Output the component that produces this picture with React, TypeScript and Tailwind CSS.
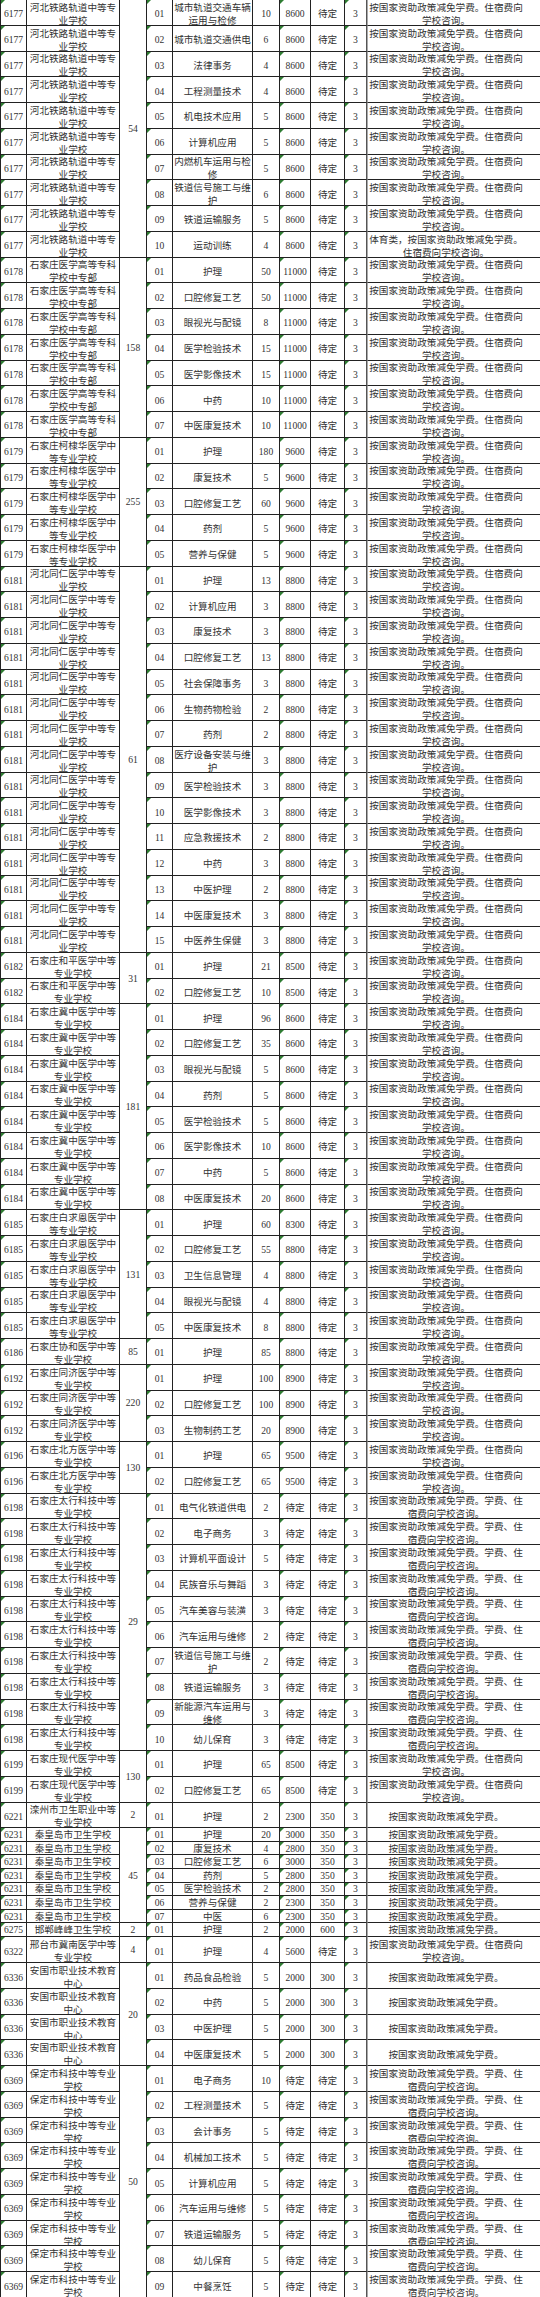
import React from "react";

type Major = { c: string; n: string; p: string; t: string; a: string; note?: string };
type Group = { code: string; school: string[]; total: string; note: string; single?: boolean; majors: Major[] };

const NOTES: Record<string, string[]> = {
  A: ["按国家资助政策减免学费。住宿费向", "学校咨询。"],
  B: ["体育类，按国家资助政策减免学费。", "住宿费向学校咨询。"],
  C: ["按国家资助政策减免学费。学费、住", "宿费向学校咨询。"],
  D: ["按国家资助政策减免学费。"],
};

const m = (c: string, n: string, p: string, t: string, a: string, note?: string): Major => ({ c, n, p, t, a, note });

const GROUPS: Group[] = [
  {
    code: "6177", school: ["河北铁路轨道中等专", "业学校"], total: "54", note: "A",
    majors: [
      m("01", "城市轨道交通车辆/运用与检修", "10", "8600", "待定"),
      m("02", "城市轨道交通供电", "6", "8600", "待定"),
      m("03", "法律事务", "4", "8600", "待定"),
      m("04", "工程测量技术", "4", "8600", "待定"),
      m("05", "机电技术应用", "5", "8600", "待定"),
      m("06", "计算机应用", "5", "8600", "待定"),
      m("07", "内燃机车运用与检/修", "5", "8600", "待定"),
      m("08", "铁道信号施工与维/护", "6", "8600", "待定"),
      m("09", "铁道运输服务", "5", "8600", "待定"),
      m("10", "运动训练", "4", "8600", "待定", "B"),
    ],
  },
  {
    code: "6178", school: ["石家庄医学高等专科", "学校中专部"], total: "158", note: "A",
    majors: [
      m("01", "护理", "50", "11000", "待定"),
      m("02", "口腔修复工艺", "50", "11000", "待定"),
      m("03", "眼视光与配镜", "8", "11000", "待定"),
      m("04", "医学检验技术", "15", "11000", "待定"),
      m("05", "医学影像技术", "15", "11000", "待定"),
      m("06", "中药", "10", "11000", "待定"),
      m("07", "中医康复技术", "10", "11000", "待定"),
    ],
  },
  {
    code: "6179", school: ["石家庄柯棣华医学中", "等专业学校"], total: "255", note: "A",
    majors: [
      m("01", "护理", "180", "9600", "待定"),
      m("02", "康复技术", "5", "9600", "待定"),
      m("03", "口腔修复工艺", "60", "9600", "待定"),
      m("04", "药剂", "5", "9600", "待定"),
      m("05", "营养与保健", "5", "9600", "待定"),
    ],
  },
  {
    code: "6181", school: ["河北同仁医学中等专", "业学校"], total: "61", note: "A",
    majors: [
      m("01", "护理", "13", "8800", "待定"),
      m("02", "计算机应用", "3", "8800", "待定"),
      m("03", "康复技术", "3", "8800", "待定"),
      m("04", "口腔修复工艺", "13", "8800", "待定"),
      m("05", "社会保障事务", "3", "8800", "待定"),
      m("06", "生物药物检验", "2", "8800", "待定"),
      m("07", "药剂", "2", "8800", "待定"),
      m("08", "医疗设备安装与维/护", "3", "8800", "待定"),
      m("09", "医学检验技术", "3", "8800", "待定"),
      m("10", "医学影像技术", "3", "8800", "待定"),
      m("11", "应急救援技术", "2", "8800", "待定"),
      m("12", "中药", "3", "8800", "待定"),
      m("13", "中医护理", "2", "8800", "待定"),
      m("14", "中医康复技术", "3", "8800", "待定"),
      m("15", "中医养生保健", "3", "8800", "待定"),
    ],
  },
  {
    code: "6182", school: ["石家庄和平医学中等", "专业学校"], total: "31", note: "A",
    majors: [
      m("01", "护理", "21", "8500", "待定"),
      m("02", "口腔修复工艺", "10", "8500", "待定"),
    ],
  },
  {
    code: "6184", school: ["石家庄冀中医学中等", "专业学校"], total: "181", note: "A",
    majors: [
      m("01", "护理", "96", "8600", "待定"),
      m("02", "口腔修复工艺", "35", "8600", "待定"),
      m("03", "眼视光与配镜", "5", "8600", "待定"),
      m("04", "药剂", "5", "8600", "待定"),
      m("05", "医学检验技术", "5", "8600", "待定"),
      m("06", "医学影像技术", "10", "8600", "待定"),
      m("07", "中药", "5", "8600", "待定"),
      m("08", "中医康复技术", "20", "8600", "待定"),
    ],
  },
  {
    code: "6185", school: ["石家庄白求恩医学中", "等专业学校"], total: "131", note: "A",
    majors: [
      m("01", "护理", "60", "8300", "待定"),
      m("02", "口腔修复工艺", "55", "8800", "待定"),
      m("03", "卫生信息管理", "4", "8800", "待定"),
      m("04", "眼视光与配镜", "4", "8800", "待定"),
      m("05", "中医康复技术", "8", "8800", "待定"),
    ],
  },
  {
    code: "6186", school: ["石家庄协和医学中等", "专业学校"], total: "85", note: "A",
    majors: [m("01", "护理", "85", "8800", "待定")],
  },
  {
    code: "6192", school: ["石家庄同济医学中等", "专业学校"], total: "220", note: "A",
    majors: [
      m("01", "护理", "100", "8900", "待定"),
      m("02", "口腔修复工艺", "100", "8900", "待定"),
      m("03", "生物制药工艺", "20", "8900", "待定"),
    ],
  },
  {
    code: "6196", school: ["石家庄北方医学中等", "专业学校"], total: "130", note: "A",
    majors: [
      m("01", "护理", "65", "9500", "待定"),
      m("02", "口腔修复工艺", "65", "9500", "待定"),
    ],
  },
  {
    code: "6198", school: ["石家庄太行科技中等", "专业学校"], total: "29", note: "C",
    majors: [
      m("01", "电气化铁道供电", "2", "待定", "待定"),
      m("02", "电子商务", "3", "待定", "待定"),
      m("03", "计算机平面设计", "5", "待定", "待定"),
      m("04", "民族音乐与舞蹈", "3", "待定", "待定"),
      m("05", "汽车美容与装潢", "3", "待定", "待定"),
      m("06", "汽车运用与维修", "2", "待定", "待定"),
      m("07", "铁道信号施工与维/护", "2", "待定", "待定"),
      m("08", "铁道运输服务", "3", "待定", "待定"),
      m("09", "新能源汽车运用与/维修", "3", "待定", "待定"),
      m("10", "幼儿保育", "3", "待定", "待定"),
    ],
  },
  {
    code: "6199", school: ["石家庄现代医学中等", "专业学校"], total: "130", note: "A",
    majors: [
      m("01", "护理", "65", "8500", "待定"),
      m("02", "口腔修复工艺", "65", "8500", "待定"),
    ],
  },
  {
    code: "6221", school: ["滦州市卫生职业中等", "专业学校"], total: "2", note: "D",
    majors: [m("01", "护理", "2", "2300", "350")],
  },
  {
    code: "6231", school: ["秦皇岛市卫生学校"], total: "45", note: "D", single: true,
    majors: [
      m("01", "护理", "20", "3000", "350"),
      m("02", "康复技术", "4", "2800", "350"),
      m("03", "口腔修复工艺", "6", "3000", "350"),
      m("04", "药剂", "5", "2800", "350"),
      m("05", "医学检验技术", "2", "2800", "350"),
      m("06", "营养与保健", "2", "2300", "350"),
      m("07", "中医", "6", "2300", "350"),
    ],
  },
  {
    code: "6275", school: ["邯郸峰峰卫生学校"], total: "2", note: "D", single: true,
    majors: [m("01", "护理", "2", "2000", "600")],
  },
  {
    code: "6322", school: ["邢台市冀南医学中等", "专业学校"], total: "4", note: "A",
    majors: [m("01", "护理", "4", "5600", "待定")],
  },
  {
    code: "6336", school: ["安国市职业技术教育", "中心"], total: "20", note: "D",
    majors: [
      m("01", "药品食品检验", "5", "2000", "300"),
      m("02", "中药", "5", "2000", "300"),
      m("03", "中医护理", "5", "2000", "300"),
      m("04", "中医康复技术", "5", "2000", "300"),
    ],
  },
  {
    code: "6369", school: ["保定市科技中等专业", "学校"], total: "50", note: "C",
    majors: [
      m("01", "电子商务", "10", "待定", "待定"),
      m("02", "工程测量技术", "5", "待定", "待定"),
      m("03", "会计事务", "5", "待定", "待定"),
      m("04", "机械加工技术", "5", "待定", "待定"),
      m("05", "计算机应用", "5", "待定", "待定"),
      m("06", "汽车运用与维修", "5", "待定", "待定"),
      m("07", "铁道运输服务", "5", "待定", "待定"),
      m("08", "幼儿保育", "5", "待定", "待定"),
      m("09", "中餐烹饪", "5", "待定", "待定"),
    ],
  },
];

function Mark() {
  return (
    <span className="absolute left-0 top-0 h-0 w-0 border-r-[4px] border-t-[4px] border-r-transparent border-t-[#2e7d32]" />
  );
}

function Cell({
  w,
  lines,
  single,
  mark,
  extra = "",
}: {
  w: string;
  lines: string[];
  single?: boolean;
  mark?: boolean;
  extra?: string;
}) {
  return (
    <div
      className={`relative flex shrink-0 items-center justify-center border-b border-r border-[#222] text-center ${w} ${
        single ? "" : "pt-[3px]"
      } ${extra}`}
    >
      {mark && <Mark />}
      <div className="whitespace-nowrap">
        {lines.map((l, i) => (
          <div key={i}>{l}</div>
        ))}
      </div>
    </div>
  );
}

function GroupBlock({ g }: { g: Group }) {
  const h = g.single ? "h-[13.6px]" : "h-[25.75px]";
  return (
    <div className="flex">
      <div className="flex flex-col">
        {g.majors.map((_, i) => (
          <div key={i} className={`flex ${h}`}>
            <Cell w="w-[26px]" lines={[g.code]} single={g.single} mark />
            <Cell w="w-[93px]" lines={g.school} single={g.single} />
          </div>
        ))}
      </div>
      <div className="flex w-[27px] shrink-0 items-center justify-center border-b border-r border-[#222]">
        {g.total}
      </div>
      <div className="flex flex-col">
        {g.majors.map((mj, i) => (
          <div key={i} className={`flex ${h}`}>
            <Cell w="w-[26px]" lines={[mj.c]} single={g.single} mark />
            <Cell w="w-[80px]" lines={mj.n.split("/")} single={g.single} />
            <Cell w="w-[27px]" lines={[mj.p]} single={g.single} />
            <Cell w="w-[31px]" lines={[mj.t]} single={g.single} mark />
            <Cell w="w-[34px]" lines={[mj.a]} single={g.single} />
            <Cell w="w-[22px]" lines={["3"]} single={g.single} mark extra="border-r-[#555]" />
            <Cell
              w="w-[174px]"
              lines={NOTES[mj.note ?? g.note]}
              single={g.single}
              extra="pr-[16px] border-l border-l-[#aaa]"
            />
          </div>
        ))}
      </div>
    </div>
  );
}

export default function App() {
  return (
    <div className="w-[540px] overflow-hidden bg-white">
      <div className="flex w-[540px] flex-col border-l border-[#222] font-['Liberation_Serif','Noto_Sans_CJK_SC',serif] text-[9.6px] leading-[13px] text-[#333]">
        {GROUPS.map((g) => (
          <GroupBlock key={g.code} g={g} />
        ))}
      </div>
    </div>
  );
}
